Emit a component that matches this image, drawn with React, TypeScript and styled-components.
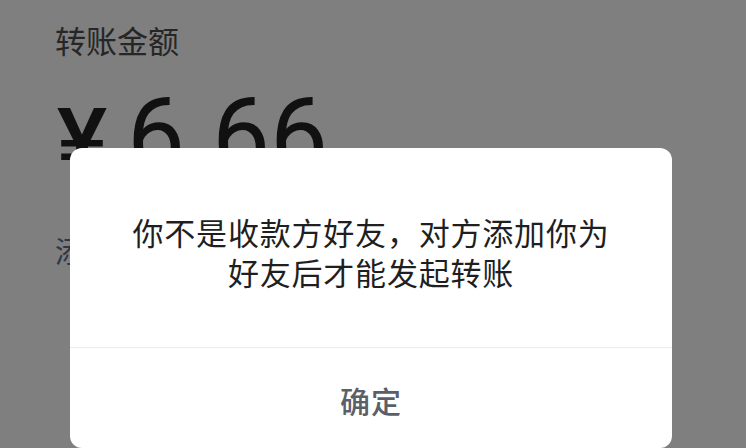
import React from "react";
import styled, { createGlobalStyle } from "styled-components";

const GlobalStyle = createGlobalStyle`
  html, body {
    margin: 0;
    padding: 0;
    background: #7f7f7f;
  }
  body {
    font-family: "Noto Sans CJK SC", "Noto Sans", sans-serif;
  }
`;

const Page = styled.div`
  position: relative;
  width: 746px;
  height: 448px;
  overflow: hidden;
  background: #7f7f7f;
  padding: 22px 0 0 55px;
  box-sizing: border-box;
`;

const Label = styled.div`
  font-size: 31px;
  line-height: 36px;
  color: #262626;
`;

const Amount = styled.div`
  display: flex;
  align-items: baseline;
  margin-top: 26px;
  color: #111;
  height: 100px;
`;

const Currency = styled.span`
  font-family: "Liberation Sans Narrow", "Liberation Sans", sans-serif;
  font-size: 90px;
  font-weight: 700;
  line-height: 1;
  margin-left: 2px;
  margin-right: 20px;
`;

const Digits = styled.span`
  font-family: Roboto, "Liberation Sans", sans-serif;
  font-size: 103px;
  font-weight: 400;
  line-height: 1;
`;

const Remark = styled.div`
  margin-top: 48px;
  font-size: 29px;
  line-height: 36px;
  color: #2f3747;
`;

const Dialog = styled.div`
  position: absolute;
  left: 70px;
  top: 148px;
  width: 602px;
  height: 300px;
  background: #fff;
  border-radius: 12px;
  display: flex;
  flex-direction: column;
`;

const Message = styled.div`
  padding: 64px 40px 55px;
  text-align: center;
  font-size: 31px;
  line-height: 40px;
  letter-spacing: 0.8px;
  color: #1f1f1f;
`;

const Footer = styled.div`
  flex: 1;
  border-top: 1px solid #ececec;
  display: flex;
  align-items: center;
  justify-content: center;
`;

const ConfirmButton = styled.button`
  border: none;
  background: transparent;
  font-family: inherit;
  font-size: 30px;
  font-weight: 500;
  letter-spacing: 1px;
  color: #5b6068;
  padding: 0;
  margin-top: 4px;
`;

export default function App() {
  return (
    <>
      <GlobalStyle />
      <Page>
        <Label>转账金额</Label>
        <Amount>
          <Currency>¥</Currency>
          <Digits>6.66</Digits>
        </Amount>
        <Remark>添加转账说明</Remark>
        <Dialog>
          <Message>
            你不是收款方好友，对方添加你为
            <br />
            好友后才能发起转账
          </Message>
          <Footer>
            <ConfirmButton>确定</ConfirmButton>
          </Footer>
        </Dialog>
      </Page>
    </>
  );
}
